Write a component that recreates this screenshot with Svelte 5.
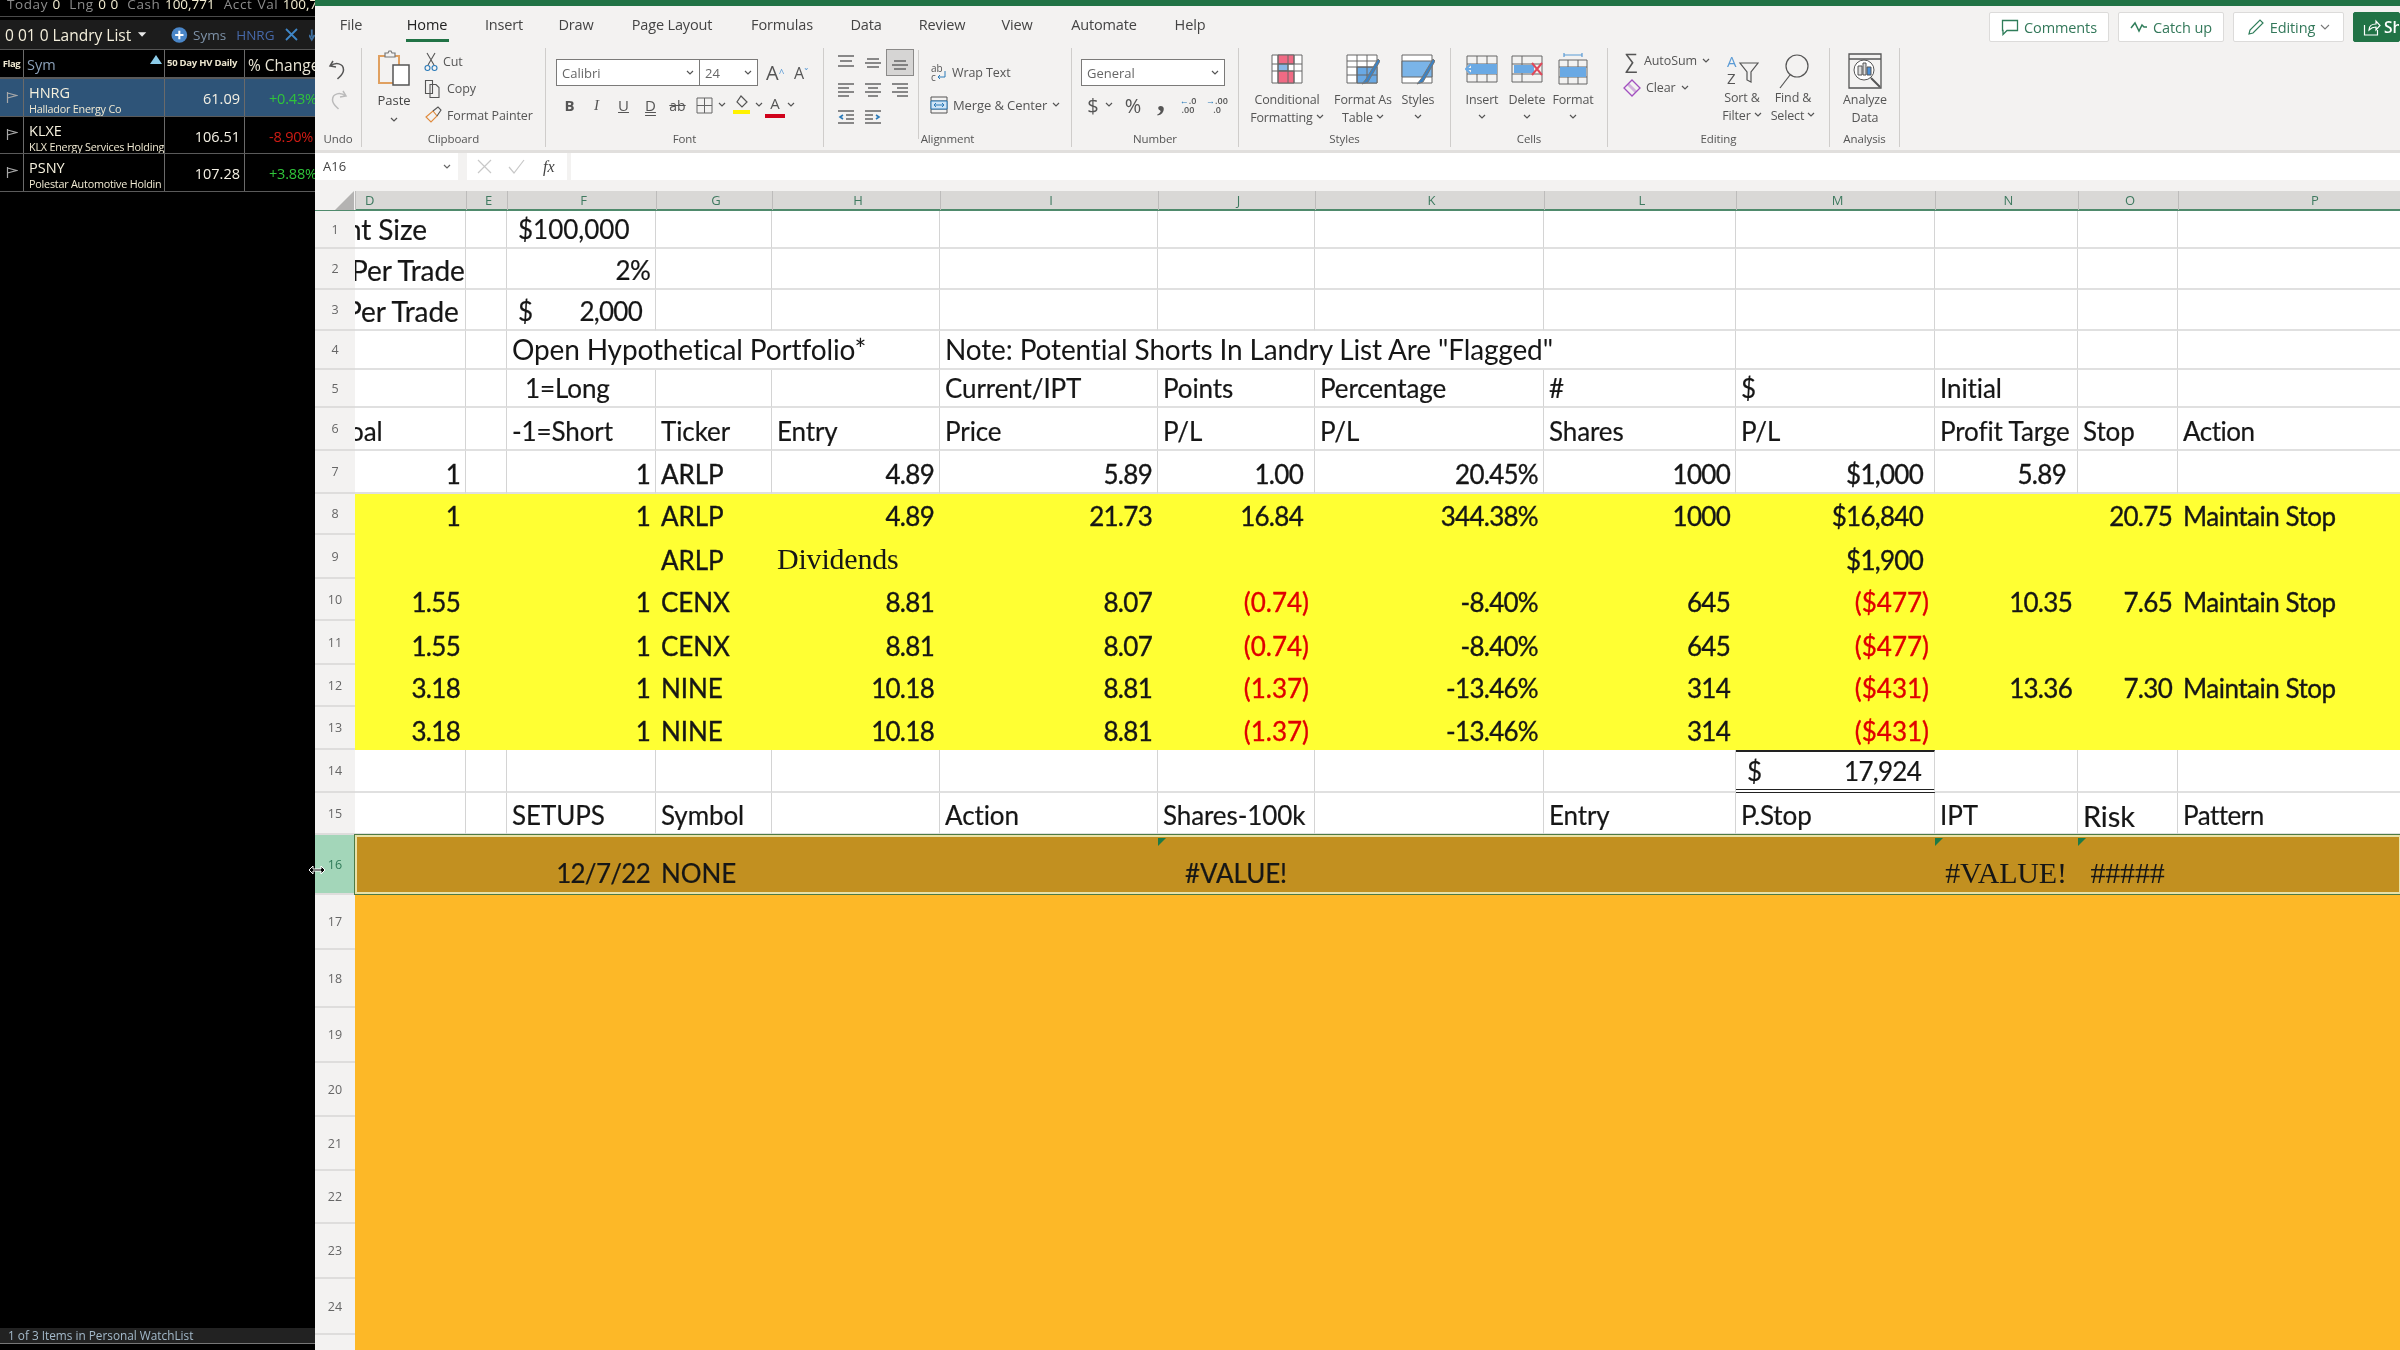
<script>
  const cols = ['D','E','F','G','H','I','J','K','L','M','N','O','P'];
  const R = 'r', P = 'r pp';
  const rows = [
    { n:1, h:38, c:{ D:['nt Size','cut1'], F:['$100,000','ind'] } },
    { n:2, h:41, c:{ D:['Per Trade','cut2'], F:['2%',R] } },
    { n:3, h:41, c:{ D:['Per Trade','cut3'], F:[['$','2,000'],'acc'] } },
    { n:4, h:39, c:{ F:['Open Hypothetical Portfolio*','note',3], I:['Note: Potential Shorts In Landry List Are "Flagged"','note',4] } },
    { n:5, h:38, c:{ F:['1=Long','ind2'], I:['Current/IPT',''], J:['Points',''], K:['Percentage',''], L:['#',''], M:['$',''], N:['Initial',''] } },
    { n:6, h:43, c:{ D:['oal','cut4'], F:['-1=Short',''], G:['Ticker',''], H:['Entry',''], I:['Price',''], J:['P/L',''], K:['P/L',''], L:['Shares',''], M:['P/L',''], N:['Profit Targe',''], O:['Stop',''], P:['Action','sm'] } },
    { n:7, h:43, k:'hv', c:{ D:['1',R], F:['1',R], G:['ARLP',''], H:['4.89',R], I:['5.89',R], J:['1.00',P], K:['20.45%',R], L:['1000',R], M:['$1,000',P], N:['5.89',P] } },
    { n:8, h:41, k:'hv y', c:{ D:['1',R], F:['1',R], G:['ARLP',''], H:['4.89',R], I:['21.73',R], J:['16.84',P], K:['344.38%',R], L:['1000',R], M:['$16,840',P], O:['20.75',R], P:['Maintain Stop','sm'] } },
    { n:9, h:44, k:'hv y', c:{ G:['ARLP',''], H:['Dividends','ser'], M:['$1,900',P] } },
    { n:10, h:42, k:'hv y', c:{ D:['1.55',R], F:['1',R], G:['CENX',''], H:['8.81',R], I:['8.07',R], J:['(0.74)','r neg'], K:['-8.40%',R], L:['645',R], M:['($477)','r neg'], N:['10.35',R], O:['7.65',R], P:['Maintain Stop','sm'] } },
    { n:11, h:44, k:'hv y', c:{ D:['1.55',R], F:['1',R], G:['CENX',''], H:['8.81',R], I:['8.07',R], J:['(0.74)','r neg'], K:['-8.40%',R], L:['645',R], M:['($477)','r neg'] } },
    { n:12, h:42, k:'hv y', c:{ D:['3.18',R], F:['1',R], G:['NINE',''], H:['10.18',R], I:['8.81',R], J:['(1.37)','r neg'], K:['-13.46%',R], L:['314',R], M:['($431)','r neg'], N:['13.36',R], O:['7.30',R], P:['Maintain Stop','sm'] } },
    { n:13, h:43, k:'hv y', c:{ D:['3.18',R], F:['1',R], G:['NINE',''], H:['10.18',R], I:['8.81',R], J:['(1.37)','r neg'], K:['-13.46%',R], L:['314',R], M:['($431)','r neg'] } },
    { n:14, h:43, c:{ M:[['$','17,924'],'acc total'] } },
    { n:15, h:42, c:{ F:['SETUPS',''], G:['Symbol',''], I:['Action',''], J:['Shares-100k',''], L:['Entry',''], M:['P.Stop',''], N:['IPT',''], O:['Risk','lg'], P:['Pattern','sm'] } },
    { n:16, h:60, k:'sel', c:{ F:['12/7/22',R], G:['NONE',''], J:['#VALUE!','ctr tri'], N:['#VALUE!','ser ctr tri'], O:['#####','ser ctr tri'] } },
    { n:17, h:55, k:'or', c:{} }, { n:18, h:58, k:'or', c:{} }, { n:19, h:55, k:'or', c:{} },
    { n:20, h:54, k:'or', c:{} }, { n:21, h:54, k:'or', c:{} }, { n:22, h:53, k:'or', c:{} },
    { n:23, h:55, k:'or', c:{} }, { n:24, h:56, k:'or', c:{} }, { n:'', h:17, k:'or', c:{} }
  ];
  function layout(r) {
    const out = [];
    for (let i = 0; i < cols.length; i++) {
      const v = r.c[cols[i]];
      const span = v && v[2] ? v[2] : 1;
      out.push({ v: v ? v[0] : '', cls: v ? v[1] : '', span });
      i += span - 1;
    }
    return out;
  }
  const tabs = [['File',72],['Home',80],['Insert',74],['Draw',70],['Page Layout',122],['Formulas',98],['Data',70],['Review',82],['View',68],['Automate',106],['Help',66]];
  const watch = [
    { s:'HNRG', n:'Hallador Energy Co', v:'61.09', p:'+0.43%', up:true, on:true },
    { s:'KLXE', n:'KLX Energy Services Holding', v:'106.51', p:'-8.90%', up:false },
    { s:'PSNY', n:'Polestar Automotive Holdin', v:'107.28', p:'+3.88%', up:true }
  ];
</script>

{#snippet chev()}
  <svg class="chev" width="8" height="6" viewBox="0 0 8 6"><path d="M1 1l3 3 3-3" fill="none" stroke="#555" stroke-width="1.2"/></svg>
{/snippet}
{#snippet lines(kind)}
  <svg width="18" height="16" viewBox="0 0 18 16" fill="none" stroke="#666" stroke-width="1.6">
    {#if kind === 'top'}<path d="M1 2h16M3 7h12M1 12h16" transform="translate(0 -1)"/>
    {:else if kind === 'mid'}<path d="M3 4h12M1 8h16M3 12h12"/>
    {:else if kind === 'bot'}<path d="M3 6h12M1 10h16M3 14h12"/>
    {:else if kind === 'left'}<path d="M1 2h16M1 6h11M1 10h16M1 14h11"/>
    {:else if kind === 'center'}<path d="M1 2h16M4 6h10M1 10h16M4 14h10"/>
    {:else if kind === 'right'}<path d="M1 2h16M6 6h11M1 10h16M6 14h11"/>
    {:else if kind === 'dec'}<path d="M1 2h16M9 6h8M9 10h8M1 14h16"/><path d="M6 6L3 8l3 2" stroke="#2a7ab8"/>
    {:else}<path d="M1 2h16M1 6h8M1 10h8M1 14h16"/><path d="M12 6l3 2-3 2" stroke="#2a7ab8"/>{/if}
  </svg>
{/snippet}

<div class="root">
  <aside class="left">
    <div class="acct"><i>Today</i> 0 &nbsp;<i>Lng</i> 0 0 &nbsp;<i>Cash</i> 100,771 &nbsp;<i>Acct Val</i> 100,771</div>
    <div class="listbar">
      <span class="ltitle">0 01 0 Landry List</span>
      <svg width="11" height="7" viewBox="0 0 11 7" class="ldrop"><path d="M1 1h9L5.500 6z" fill="#e8e8e8"/></svg>
      <svg width="18" height="18" viewBox="0 0 18 18" class="lplus"><circle cx="9" cy="9" r="8.500" fill="#4a86c8"/><path d="M9 4.500v9M4.500 9h9" stroke="#fff" stroke-width="2.200"/></svg>
      <span class="lsyms">Syms</span>
      <span class="lsym">HNRG</span>
      <svg width="13" height="13" viewBox="0 0 13 13" class="lx"><path d="M1 1l11 11M12 1L1 12" stroke="#3f86c6" stroke-width="1.800"/></svg>
      <svg width="6" height="14" viewBox="0 0 6 14"><path d="M3 1v8M0 7l3 5 3-5" stroke="#3f6f9f" stroke-width="2" fill="none"/></svg>
    </div>
    <div class="whead wrow">
      <div class="wflag flagh">Flag</div>
      <div class="wsym symh">Sym<svg width="12" height="9" viewBox="0 0 12 9" class="sorttri"><path d="M6 0l6 9H0z" fill="#8ccbe8"/></svg></div>
      <div class="wval hvh">50 Day HV Daily</div>
      <div class="wpct chh">% Change</div>
    </div>
    {#each watch as w}
      <div class="wrow wline" class:on={w.on}>
        <div class="wflag"><svg width="12" height="13" viewBox="0 0 12 13" fill="none" stroke="#a8a8a8" stroke-width="1.200"><path d="M1.500 1v11M1.500 2l9 2.500-9 2.500"/></svg></div>
        <div class="wsym"><div class="tick">{w.s}</div><div class="tname">{w.n}</div></div>
        <div class="wval val">{w.v}</div>
        <div class="wpct pct" class:up={w.up} class:dn={!w.up}>{w.p}</div>
      </div>
    {/each}
    <div class="lspace"></div>
    <div class="lstatus">1 of 3 Items in Personal WatchList</div>
    <div class="lscroll"></div>
  </aside>

  <main class="xl">
    <div class="greenbar"></div>
    <div class="tabbar">
      <nav class="tabs">
        {#each tabs as t}
          <div class="tab" class:act={t[0]==='Home'} style="width:{t[1]}px">{t[0]}</div>
        {/each}
      </nav>
      <div class="acts">
        <div class="btn" style="width:120px">
          <svg width="18" height="17" viewBox="0 0 18 17" fill="none" stroke="#2f7d5a" stroke-width="1.300"><path d="M1.500 1.500h15v10H6l-4 4v-4h-.5z"/></svg>Comments</div>
        <div class="btn" style="width:106px">
          <svg width="18" height="12" viewBox="0 0 18 12" fill="none" stroke="#2f7d5a" stroke-width="1.500"><path d="M1 7l4-5 4 8 3-6 2 2h3"/></svg>Catch up</div>
        <div class="btn" style="width:111px">
          <svg width="18" height="18" viewBox="0 0 18 18" fill="none" stroke="#2f7d5a" stroke-width="1.200"><path d="M2 16l1-4L13 2l3 3L6 15z"/></svg>Editing
          <svg width="10" height="6" viewBox="0 0 10 6"><path d="M1 1l4 4 4-4" fill="none" stroke="#777" stroke-width="1.100"/></svg></div>
        <div class="btn share">
          <svg width="18" height="17" viewBox="0 0 18 17" fill="none" stroke="#fff" stroke-width="1.200"><path d="M1.500 6v10h13v-5M6 11c0-4 3-6 7-6V2l4 4.500L13 11V8c-3 0-5 1-7 3z"/></svg>Share</div>
      </div>
    </div>

    <div class="ribbon">
      <section class="grp" style="width:47px">
        <div class="gbody col ctr">
          <svg class="undo" width="20" height="22" viewBox="0 0 20 22" fill="none" stroke="#555" stroke-width="1.500"><path d="M5 2L2 7l6 1M2.500 7c5-4 13-3 13 4 0 4-3 6-6 9"/></svg>
          <svg class="redo" width="20" height="22" viewBox="0 0 20 22" fill="none" stroke="#bbb" stroke-width="1.500"><path d="M15 2l3 5-6 1M17.500 7c-5-4-13-3-13 4 0 4 3 6 6 9"/></svg>
        </div>
        <div class="glabel">Undo</div>
      </section>

      <section class="grp" style="width:184px">
        <div class="gbody row">
          <div class="paste">
            <svg width="34" height="38" viewBox="0 0 34 38" fill="none">
              <path d="M2 6h20v27H2z" stroke="#e0a060" stroke-width="2"/>
              <path d="M8 6V3h3l1-2 2 0 1 2h3v4H8z" fill="#f3f2f1" stroke="#777" stroke-width="1.200"/>
              <path d="M16 15h16v20H16z" fill="#fff" stroke="#555" stroke-width="1.500"/>
            </svg>
            <div class="plabel">Paste</div>
            {@render chev()}
          </div>
          <div class="clip">
            <div class="citem"><svg width="14" height="20" viewBox="0 0 14 20" fill="none" stroke="#555" stroke-width="1.100"><path d="M3 1l7 12M11 1L4 13"/><circle cx="3.500" cy="16" r="2.500" stroke="#2a7ab8"/><circle cx="10.500" cy="16" r="2.500" stroke="#2a7ab8"/></svg>Cut</div>
            <div class="citem"><svg width="18" height="20" viewBox="0 0 18 20" fill="none" stroke="#555" stroke-width="1.100"><path d="M1.500 1.500h7v13h-7zM6 5.500h6l3 3v10H6z"/></svg>Copy</div>
            <div class="citem"><svg width="18" height="20" viewBox="0 0 18 20" fill="none" stroke="#555" stroke-width="1.100"><path d="M2 11l7-6 4 5-6 6z" stroke="#e08a3c"/><path d="M9 5l5-4 3 3-4 6"/></svg>Format Painter</div>
          </div>
        </div>
        <div class="glabel">Clipboard</div>
      </section>

      <section class="grp" style="width:278px">
        <div class="gbody fontg">
          <div class="frow1">
            <div class="combo fname">Calibri{@render chev()}</div>
            <div class="combo fsize">24{@render chev()}</div>
            <span class="grow">A<sup>^</sup></span>
            <span class="shrink">A<sup>ˇ</sup></span>
          </div>
          <div class="frow2">
            <span class="fi b1">B</span><span class="fi i1">I</span><span class="fi u1">U</span><span class="fi u2">D</span><span class="fi s1">ab</span>
            <span class="fi"><svg width="17" height="17" viewBox="0 0 17 17" fill="none" stroke="#666"><path d="M1 1h15v15H1zM8.500 1v15M1 8.500h15"/></svg></span>{@render chev()}
            <span class="fi fill"><svg width="17" height="20" viewBox="0 0 17 20" fill="none"><path d="M8 1l6 6-5 5-5-5z" stroke="#555" stroke-width="1.200"/><path d="M0 15h17v4H0z" fill="#fff200"/></svg></span>{@render chev()}
            <span class="fi tcol">A</span>{@render chev()}
          </div>
        </div>
        <div class="glabel">Font</div>
      </section>

      <section class="grp" style="width:248px">
        <div class="gbody row">
          <div class="aligns">
            <span class="ai">{@render lines('top')}</span><span class="ai">{@render lines('mid')}</span><span class="ai on">{@render lines('bot')}</span>
            <span class="ai">{@render lines('left')}</span><span class="ai">{@render lines('center')}</span><span class="ai">{@render lines('right')}</span>
            <span class="ai">{@render lines('dec')}</span><span class="ai">{@render lines('inc')}</span>
          </div>
          <div class="wraps">
            <div class="citem"><svg width="17" height="20" viewBox="0 0 17 20" fill="none" stroke="#2a7ab8"><text x="1" y="9" font-size="10" fill="#555" stroke="none" font-family="Open Sans">ab</text><text x="1" y="18" font-size="10" fill="#555" stroke="none" font-family="Open Sans">c</text><path d="M15 8v6H8M10 12l-2 2 2 2"/></svg>Wrap Text</div>
            <div class="citem merge"><svg width="18" height="20" viewBox="0 0 18 20" fill="none" stroke="#555"><path d="M1 2h16v16H1zM1 6h16M1 14h16"/><path d="M1 6h16v8H1z" fill="#cfe4f5" stroke="#2a7ab8"/><path d="M4 10h10M6 8l-2 2 2 2M12 8l2 2-2 2" stroke="#2a7ab8"/></svg>Merge &amp; Center {@render chev()}</div>
          </div>
        </div>
        <div class="glabel">Alignment</div>
      </section>

      <section class="grp" style="width:167px">
        <div class="gbody numg">
          <div class="combo nfmt">General{@render chev()}</div>
          <div class="nrow">
            <span class="dollar">$</span>{@render chev()}
            <span class="pctg">%</span><span class="comma">,</span>
            <span class="decs"><b>←</b>.0<br/>.00</span><span class="decs"><b>→</b>.00<br/>.0</span>
          </div>
        </div>
        <div class="glabel">Number</div>
      </section>

      <section class="grp" style="width:212px">
        <div class="gbody row">
          <div class="big" style="width:78px;margin-left:9px">
            <svg width="34" height="36" viewBox="0 0 34 36" fill="none" stroke="#666"><path d="M2 2h30v28H2z" fill="#fff"/><path d="M8 2h16v9H8z" fill="#f06a84"/><path d="M8 11h10v7H8z" fill="#8ab8e6"/><path d="M8 18h16v12H8z" fill="#f06a84"/><path d="M2 11h30M2 18h30M8 2v28M18 2v28M24 2v28"/></svg>
            <div class="bl">Conditional</div><div class="bl">Formatting {@render chev()}</div>
          </div>
          <div class="big" style="width:74px">
            <svg width="34" height="36" viewBox="0 0 34 36" fill="none" stroke="#666"><path d="M1 2h30v28H1z" fill="#fff"/><path d="M11 14h20v16H11z" fill="#6aa9e4"/><path d="M1 8h30M1 14h30M1 22h30M11 2v28M21 2v28"/><path d="M32 6L20 26l-4 5 6-2L34 8z" fill="#3b82c4" stroke="#777"/></svg>
            <div class="bl">Format As</div><div class="bl">Table {@render chev()}</div>
          </div>
          <div class="big" style="width:36px">
            <svg width="34" height="36" viewBox="0 0 34 36" fill="none" stroke="#666"><path d="M1 2h30v28H1z" fill="#fff"/><path d="M1 8h30v16H1z" fill="#7ab4e8"/><path d="M32 6L20 26l-4 5 6-2L34 8z" fill="#3b82c4" stroke="#777"/></svg>
            <div class="bl">Styles</div><div class="bl">{@render chev()}</div>
          </div>
        </div>
        <div class="glabel">Styles</div>
      </section>

      <section class="grp" style="width:157px">
        <div class="gbody row">
          <div class="big" style="width:44px;margin-left:9px">
            <svg width="34" height="36" viewBox="0 0 34 36" fill="none" stroke="#666"><path d="M2 3h30v26H2zM2 11h30M2 21h30M12 3v26M22 3v26"/><path d="M6 11h26v10H6z" fill="#6aa9e4" stroke="none"/><path d="M14 16H1M6 11l-5 5 5 5" stroke="#6aa9e4" stroke-width="2"/></svg>
            <div class="bl">Insert</div><div class="bl">{@render chev()}</div>
          </div>
          <div class="big" style="width:46px">
            <svg width="34" height="36" viewBox="0 0 34 36" fill="none" stroke="#666"><path d="M2 3h30v26H2zM2 11h30M2 21h30M12 3v26"/><path d="M4 12h20v8H4z" fill="#6aa9e4" stroke="none"/><path d="M22 10l10 12M32 10L22 22" stroke="#e0485a" stroke-width="2"/></svg>
            <div class="bl">Delete</div><div class="bl">{@render chev()}</div>
          </div>
          <div class="big" style="width:46px">
            <svg width="34" height="36" viewBox="0 0 34 36" fill="none" stroke="#666"><path d="M3 7h28v24H3zM3 14h28M3 24h28M12 7v24M22 7v24"/><path d="M4 14h26v10H4z" fill="#6aa9e4" stroke="none"/><path d="M8 2h18M8 0v4M26 0v4" stroke="#5b9bd5" stroke-width="1.200"/></svg>
            <div class="bl">Format</div><div class="bl">{@render chev()}</div>
          </div>
        </div>
        <div class="glabel">Cells</div>
      </section>

      <section class="grp" style="width:222px">
        <div class="gbody row">
          <div class="edits">
            <div class="citem"><span class="sigma">∑</span>AutoSum {@render chev()}</div>
            <div class="citem"><svg width="18" height="18" viewBox="0 0 18 18" fill="none"><path d="M9 1l8 8-8 8-8-8z" stroke="#a24fc0" stroke-width="1.300"/><path d="M5 5l8 8" stroke="#a24fc0" stroke-width="3" opacity=".4"/></svg>Clear {@render chev()}</div>
          </div>
          <div class="big" style="width:52px">
            <svg width="34" height="36" viewBox="0 0 34 36" fill="none" stroke="#555" stroke-width="1.200"><text x="2" y="14" font-size="15" fill="#5b9bd5" stroke="none" font-family="Open Sans">A</text><text x="2" y="31" font-size="15" fill="#555" stroke="none" font-family="Open Sans">Z</text><path d="M15 10h18l-7 9v10l-4-2v-8z"/></svg>
            <div class="bl sh">Sort &amp;</div><div class="bl">Filter {@render chev()}</div>
          </div>
          <div class="big" style="width:50px">
            <svg width="34" height="36" viewBox="0 0 34 36" fill="none" stroke="#555" stroke-width="1.200"><circle cx="21" cy="13" r="11"/><path d="M14 22L4 35"/></svg>
            <div class="bl sh">Find &amp;</div><div class="bl">Select {@render chev()}</div>
          </div>
        </div>
        <div class="glabel">Editing</div>
      </section>

      <section class="grp" style="width:70px">
        <div class="gbody row">
          <div class="big" style="width:70px">
            <svg width="34" height="36" viewBox="0 0 34 36" fill="none" stroke="#555"><path d="M1 1h32v34H1zM1 6h32" stroke-width="1.300"/><circle cx="16" cy="17" r="10" fill="#fff"/><path d="M10 13h4v9h-4z" fill="#ddd"/><path d="M15 10h3v12h-3z" fill="#ddd"/><path d="M19 14h4v8h-4z" fill="#4a90d9"/><path d="M23 25l9 9" stroke-width="2"/></svg>
            <div class="bl">Analyze</div><div class="bl">Data</div>
          </div>
        </div>
        <div class="glabel">Analysis</div>
      </section>
    </div>

    <div class="fbar">
      <div class="namebox">A16<svg width="8" height="6" viewBox="0 0 8 6"><path d="M1 1l3 3 3-3" fill="none" stroke="#666" stroke-width="1.200"/></svg></div>
      <div class="fxbox">
        <svg width="15" height="15" viewBox="0 0 15 15"><path d="M1 1l13 13M14 1L1 14" stroke="#c8c8c8" stroke-width="1.200"/></svg>
        <svg width="17" height="15" viewBox="0 0 17 15"><path d="M1 8l5 6L16 1" stroke="#c8c8c8" stroke-width="1.200" fill="none"/></svg>
        <span class="fx">fx</span>
      </div>
      <div class="finput"></div>
    </div>

    <div class="sheet">
      <div class="colhead grid">
        <div class="corner"><svg width="20" height="19" viewBox="0 0 20 19"><path d="M19 0v19H0z" fill="#b4b3b2"/></svg></div>
        {#each cols as h}<div class="ch">{h}</div>{/each}
      </div>
      {#each rows as r}
        <div class="grid srow {r.k || ''}" style="height:{r.h}px">
          <div class="rh">{r.n}</div>
          {#each layout(r) as cell}
            <div class="cell {cell.cls}" style="grid-column:span {cell.span}">
              {#if Array.isArray(cell.v)}<span>{cell.v[0]}</span><span>{cell.v[1]}</span>{:else}<span>{cell.v}</span>{/if}
            </div>
          {/each}
        </div>
      {/each}
    </div>
  </main>

  <svg class="cursor" width="18" height="14" viewBox="0 0 18 14"><path d="M1 7l4-4v3h8V3l4 4-4 4V8H5v3z" fill="#000" stroke="#fff" stroke-width="1"/></svg>
</div>

<style>
  :global(body) { margin: 0; background: #000; }
  .root { display: flex; width: 2400px; height: 1350px; overflow: hidden; position: relative; font-family: "Open Sans", "Liberation Sans", sans-serif; filter: blur(.45px); }

  /* Left watchlist */
  .left { width: 315px; flex: none; background: #000; display: flex; flex-direction: column; color: #eee; overflow: hidden; }
  .acct { height: 16px; line-height: 9px; font-size: 13.500px; color: #f2ecd0; white-space: nowrap; padding-left: 7px; border-bottom: 1px solid #4a4a4a; overflow: hidden; word-spacing: 1px; }
  .acct i { font-style: normal; color: #8c8c8c; letter-spacing: .6px; }
  .listbar { height: 30px; margin-top: 3px; background: #1c1c1c; display: flex; align-items: center; padding-left: 5px; white-space: nowrap; border-bottom: 1px solid #555; box-sizing: border-box; }
  .ltitle { font-size: 15.500px; color: #f4efdc; }
  .ldrop { margin-left: 6px; }
  .lplus { margin-left: 24px; }
  .lsyms { font-size: 13.500px; color: #7e92a8; margin-left: 5px; }
  .lsym { font-size: 13.500px; color: #4668a8; margin-left: 10px; }
  .lx { margin: 0 11px 0 11px; flex: none; }
  .wrow { display: grid; grid-template-columns: 24px 141px 80px 70px; border-bottom: 1px solid #5a5a5a; box-sizing: border-box; height: 37.500px; }
  .wrow > div { border-right: 1px solid #6a6a6a; box-sizing: border-box; overflow: hidden; white-space: nowrap; }
  .wrow > div:last-child { border-right: 0; }
  .whead { height: 29px; border-bottom: 2px solid #5a5a5a; }
  .wflag { display: flex; align-items: center; justify-content: center; }
  .flagh { font-size: 9.500px; font-weight: 700; color: #ece6cf; letter-spacing: -.4px; }
  .symh { font-size: 14.500px; color: #8ba0b8; padding-left: 3px; line-height: 29px; position: relative; }
  .sorttri { position: absolute; right: 2px; top: 5px; }
  .hvh { font-size: 9.500px; font-weight: 700; color: #ece6cf; letter-spacing: -.25px; padding-left: 2px; line-height: 26px; }
  .chh { font-size: 15.500px; color: #e8e4d4; padding-left: 3px; line-height: 30px; }
  .wline.on { background: #2e5478; }
  .wline .wsym { padding-left: 5px; padding-top: 5px; }
  .tick { font-size: 14.500px; line-height: 18px; color: #f6f1de; }
  .tname { font-size: 10.800px; line-height: 14px; color: #f0e9d2; letter-spacing: -.22px; }
  .val { font-size: 14.500px; text-align: right; padding-right: 4px; line-height: 39px; color: #f4f0e4; }
  .pct { font-size: 14.500px; line-height: 39px; text-align: left; padding-left: 24px; letter-spacing: -.2px; }
  .up { color: #2fc43a; }
  .dn { color: #cf1b14; }
  .lspace { flex: 1; }
  .lstatus { height: 15px; background: #222; font-size: 11.800px; line-height: 15px; color: #a4bacb; padding-left: 8px; white-space: nowrap; }
  .lscroll { height: 6px; background: #000; border-top: 1px solid #777; }

  /* Excel */
  .xl { flex: 1; display: flex; flex-direction: column; background: #f3f2f1; min-width: 0; overflow: hidden; }
  .greenbar { height: 6px; background: #217346; flex: none; }
  .tabbar { height: 42px; display: flex; flex: none; }
  .tabs { display: flex; }
  .tab { text-align: center; font-size: 14.500px; line-height: 38px; height: 36px; color: #444; position: relative; letter-spacing: -.15px; }
  .tab.act { color: #222; }
  .tab.act::after { content: ""; position: absolute; left: 19px; right: 18px; top: 33px; height: 3px; background: #217346; }
  .acts { margin-left: auto; display: flex; gap: 9px; padding-top: 6px; width: 411px; flex: none; box-sizing: border-box; }
  .btn { height: 30px; flex: none; box-sizing: border-box; background: #fff; border: 1px solid #dcdbda; border-radius: 2px; display: flex; align-items: center; justify-content: center; gap: 5px; font-size: 14.500px; color: #33785a; letter-spacing: -.1px; white-space: nowrap; }
  .btn svg { flex: none; }
  .share { width: 47px; background: #217346; border-color: #217346; color: #fff; justify-content: flex-start; padding-left: 9px; overflow: hidden; font-weight: 600; font-size: 15.500px; gap: 3px; }
  .ribbon { height: 102px; display: flex; flex: none; box-sizing: border-box; padding-bottom: 3px; }
  .grp { display: flex; flex-direction: column; flex: none; border-right: 1px solid #cfcdcb; box-sizing: border-box; min-width: 0; }
  .gbody { flex: 1; min-height: 0; }
  .glabel { height: 17px; line-height: 18px; text-align: center; font-size: 11.500px; color: #555; letter-spacing: -.1px; white-space: nowrap; }
  .row { display: flex; }
  .col { display: flex; flex-direction: column; }
  .ctr { align-items: center; }
  .undo { margin-top: 11px; }
  .redo { margin-top: 8px; }
  .paste { width: 52px; margin-left: 6px; display: flex; flex-direction: column; align-items: center; padding-top: 2px; }
  .plabel { font-size: 13px; line-height: 18px; margin-top: 3px; color: #444; }
  .paste .chev { margin-top: 8px; }
  .clip { margin-left: 4px; display: flex; flex-direction: column; }
  .citem { height: 27px; display: flex; align-items: center; gap: 5px; font-size: 12.500px; color: #555; white-space: nowrap; letter-spacing: -.1px; }
  .citem svg:first-child { flex: none; }
  .fontg { padding-left: 10px; padding-top: 11px; }
  .frow1 { display: flex; align-items: center; height: 27px; }
  .combo { height: 27px; box-sizing: border-box; border: 1px solid #7b7a79; background: #fff; display: flex; align-items: center; justify-content: space-between; padding: 0 5px; font-size: 13px; color: #666; }
  .fname { width: 144px; }
  .fsize { width: 58px; border-left: 0; }
  .grow { margin-left: 8px; font-size: 20px; color: #555; width: 28px; line-height: 20px; }
  .shrink { font-size: 16px; color: #555; width: 24px; line-height: 20px; }
  sup { font-size: 10px; color: #5b9bd5; vertical-align: top; }
  .frow2 { display: flex; align-items: center; margin-top: 6px; height: 26px; font-size: 15px; color: #555; }
  .fi { width: 27px; text-align: center; flex: none; display: flex; align-items: center; justify-content: center; }
  .b1 { font-weight: 700; }
  .i1 { font-style: italic; font-family: "Liberation Serif", serif; }
  .u1 { text-decoration: underline; }
  .u2 { text-decoration: underline double; }
  .s1 { text-decoration: line-through; font-size: 14px; }
  .fill { margin-left: 2px; }
  .tcol { border-bottom: 4px solid #d0021b; width: 20px; margin: 0 2px; line-height: 19px; height: 21px; }
  .aligns { display: grid; grid-template-columns: 28px 26px 28px; grid-auto-rows: 27px; width: 82px; margin-left: 8px; margin-top: 1px; height: 82px; }
  .ai { display: flex; align-items: center; justify-content: center; box-sizing: border-box; }
  .ai.on { background: #d6d5d4; border: 1px solid #8b8a89; }
  .wraps { margin-left: 4px; margin-top: 2px; border-left: 1px solid #cfcdcb; height: 80px; padding-left: 11px; padding-top: 9px; }
  .merge { margin-top: 5px; font-size: 13px; }
  .numg { padding-left: 9px; padding-top: 11px; }
  .nfmt { width: 144px; }
  .nrow { display: flex; align-items: center; height: 34px; margin-top: 2px; color: #555; }
  .dollar { font-size: 20px; width: 24px; text-align: center; }
  .pctg { font-size: 20px; width: 32px; text-align: center; margin-left: 4px; }
  .comma { font-family: "Liberation Serif", serif; font-size: 32px; font-weight: 700; width: 24px; text-align: center; line-height: 16px; margin-top: -10px; }
  .decs { font-size: 9px; line-height: 9px; width: 28px; text-align: center; font-weight: 600; margin-left: 1px; }
  .decs b { color: #2a7ab8; }
  .big { display: flex; flex-direction: column; align-items: center; flex: none; padding-top: 5px; }
  .bl { font-size: 12.500px; line-height: 18px; color: #555; white-space: nowrap; letter-spacing: -.15px; height: 18px; }
  .big svg:first-child { margin-bottom: 2px; }
  .bl .chev { margin-bottom: 1px; }
  .bl.sh { margin-top: -2px; }
  .edits { width: 108px; padding-left: 15px; box-sizing: border-box; margin-top: -1px; }
  .sigma { font-size: 20px; width: 16px; text-align: center; }
  .fbar { height: 41px; flex: none; box-sizing: border-box; display: flex; gap: 9px; border-top: 3px solid #e1dfdd; background: #f3f2f1; align-items: flex-start; }
  .namebox { width: 143px; height: 27px; background: #fff; box-sizing: border-box; font-size: 13px; line-height: 27px; color: #444; padding: 0 7px 0 8px; display: flex; justify-content: space-between; align-items: center; flex: none; }
  .fxbox { width: 100px; height: 27px; background: #fff; flex: none; display: flex; align-items: center; box-sizing: border-box; padding-left: 10px; gap: 16px; margin-right: -5px; }
  .fx { font-family: "Liberation Serif", serif; font-style: italic; font-size: 16px; color: #444; margin-left: 2px; }
  .finput { flex: 1; height: 27px; background: #fff; }

  .sheet { flex: 1; background: #fff; min-height: 0; overflow: hidden; font-family: Lato, "Liberation Sans", sans-serif; }
  .grid { display: grid; grid-template-columns: 40px 111px 41px 149px 116px 168px 218px 157px 229px 192px 199px 143px 100px 270px; }
  .colhead { height: 20px; background: #d9d8d6; border-bottom: 2px solid #4f8a6c; box-sizing: border-box; }
  .corner { background: #f3f2f1; display: flex; justify-content: flex-end; }
  .ch { font-size: 13px; line-height: 18px; text-align: center; padding-left: 3px; box-sizing: border-box; color: #3f7a60; border-left: 1px solid #bdbcbb; font-family: "Open Sans", sans-serif; }
  .ch:nth-child(2) { text-align: left; padding-left: 9px; }
  .srow { box-sizing: border-box; position: relative; }
  .rh { background: #f3f2f1; font-family: "Open Sans", sans-serif; font-size: 12.500px; color: #666; display: flex; align-items: center; justify-content: center; border-bottom: 2px solid #dedddc; box-sizing: border-box; }
  .cell { box-sizing: border-box; border-right: 1px solid #d4d4d4; border-bottom: 2px solid #e0e0e0; display: flex; align-items: flex-end; padding: 0 5px 1px 5px; overflow: hidden; white-space: nowrap; font-size: 26px; line-height: 33px; color: #161616; letter-spacing: -.1px; min-width: 0; position: relative; -webkit-text-stroke: .2px #161616; }
  .cell.r { justify-content: flex-end; letter-spacing: -.72px; }
  .cell.pp { padding-right: 11px; }
  .cell.neg { color: #e00000; letter-spacing: 0; }
  .note { font-size: 28px; letter-spacing: -.14px; -webkit-text-stroke: 0; line-height: 35px; }
  .ind { padding-left: 11px; letter-spacing: 0; }
  .ind2 { padding-left: 18px; }
  .acc { justify-content: space-between; padding-left: 11px; padding-right: 13px; letter-spacing: -.72px; }
  .cut1, .cut2, .cut3, .cut4 { padding-left: 0; }
  .cut1, .cut2, .cut3 { font-size: 28px; }
  .cut1 span { margin-left: -9px; }
  .cut2 span { margin-left: -4px; }
  .cut3 span { margin-left: -10px; }
  .cut4 span { margin-left: -6px; }
  .cell.sm { letter-spacing: -.5px; }
  .cell.lg { font-size: 29px; }
  .cell.ser { font-family: "Liberation Serif", serif; font-size: 30px; letter-spacing: -.2px; -webkit-text-stroke: 0; }
  .hv .cell { -webkit-text-stroke: .35px #161616; }
  .hv .cell.neg { -webkit-text-stroke: .35px #e00000; }
  .hv .cell.ser { -webkit-text-stroke: 0; }
  .y .cell { background: #ffff33; border-color: #ffff33; padding-bottom: 0; }
  .y .cell.ser { padding-bottom: 2px; }
  .total { border-top: 2px solid #222; border-bottom: 4px double #222; }
  .sel .cell { background: #c29020; border-color: #c29020; padding-bottom: 3px; }
  .sel .cell.ser { padding-bottom: 4px; }
  .sel .rh { background: #a3d6b9; color: #2f7a58; }
  .sel::after { content: ""; position: absolute; left: 39px; right: -2px; top: -1px; bottom: 0; border: 1px solid #4d7a44; box-shadow: inset 0 0 0 2px #e9e2a8; pointer-events: none; }
  .cell.ctr { justify-content: center; }
  .tri::before { content: ""; position: absolute; left: 0; top: 3px; border-top: 8px solid #1d7a46; border-right: 8px solid transparent; }
  .or .cell { background: #fdb827; border-color: #fdb827; }
  .cursor { position: absolute; left: 308px; top: 863px; }
</style>
